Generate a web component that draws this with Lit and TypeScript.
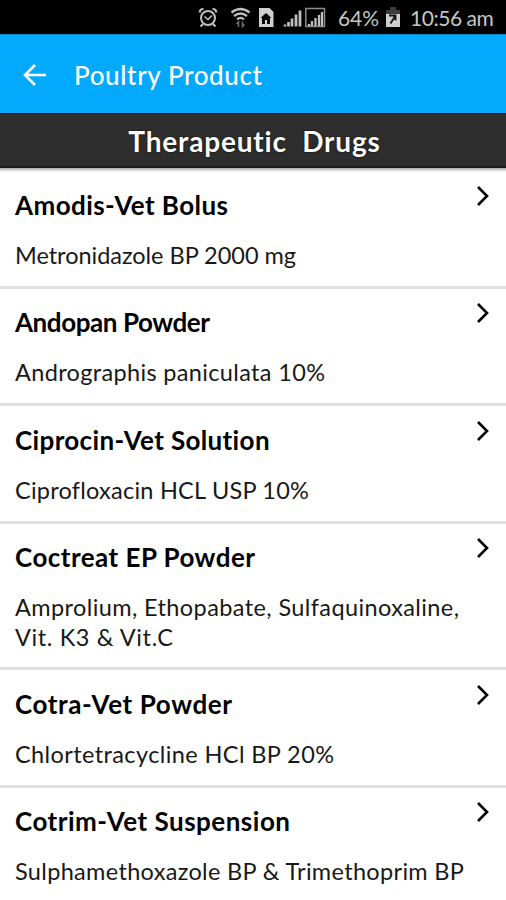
import { LitElement, html, css, svg } from "lit";
import { customElement, property } from "lit/decorators.js";

interface Line { text: string; width: number }
interface Drug { name: Line; lines: Line[] }

const DRUGS: Drug[] = [
  { name: { text: "Amodis-Vet Bolus", width: 213 }, lines: [{ text: "Metronidazole BP 2000 mg", width: 281 }] },
  { name: { text: "Andopan Powder", width: 195 }, lines: [{ text: "Andrographis paniculata 10%", width: 310 }] },
  { name: { text: "Ciprocin-Vet Solution", width: 255 }, lines: [{ text: "Ciprofloxacin HCL USP 10%", width: 294 }] },
  {
    name: { text: "Coctreat EP Powder", width: 240 },
    lines: [
      { text: "Amprolium, Ethopabate, Sulfaquinoxaline,", width: 444 },
      { text: "Vit. K3 & Vit.C", width: 158 },
    ],
  },
  { name: { text: "Cotra-Vet Powder", width: 217 }, lines: [{ text: "Chlortetracycline HCl BP 20%", width: 319 }] },
  { name: { text: "Cotrim-Vet Suspension", width: 275 }, lines: [{ text: "Sulphamethoxazole BP & Trimethoprim BP", width: 449 }] },
];

/** One line of text whose tracking is adjusted so that it spans a given width. */
@customElement("fit-text")
export class FitText extends LitElement {
  @property() text = "";
  @property({ type: Number }) span = 0;

  static styles = css`
    :host { display: block; white-space: pre; }
    .run { display: inline-block; }
  `;

  render() {
    return html`<span class="run">${this.text}</span>`;
  }

  updated() {
    const run = this.renderRoot.querySelector(".run") as HTMLElement;
    run.style.letterSpacing = "0px";
    const natural = run.getBoundingClientRect().width;
    run.style.letterSpacing = `${(this.span - natural) / (this.text.length - 1)}px`;
  }
}

@customElement("status-bar")
export class StatusBar extends LitElement {
  static styles = css`
    :host {
      display: flex; height: 34px; background: #000; color: #c6c6c6;
      font: 21px/35px Lato, sans-serif; box-sizing: border-box; padding-left: 197px;
    }
    svg { display: block; flex: none; }
    .clock { margin-left: 9px; }
  `;

  render() {
    return html`
      <svg width="141" height="34" viewBox="197 0 141 34" fill="none" stroke="#c0c0c0">
        <circle cx="208" cy="18" r="7" stroke-width="2"/>
        <path d="M199.500 12.500Q200 9 203.500 8.700M212.500 8.700Q216 9 216.500 12.500M203 24l-2.500 2.500M213 24l2.500 2.500" stroke-width="2"/>
        <path d="M204.500 16.500l3.500 3 4-4" stroke-width="1.600"/>
        <path d="M231.500 12.500Q240.500 5.500 249.500 12.500M234 16Q240.500 11 247 16M237 19.300Q240.500 16.500 244 19.300" stroke-width="2.300"/>
        <path d="M238.500 27v-5l-2 2M242.500 21.500v5l2-2" stroke="#6c6c6c" stroke-width="1.600"/>
        <path d="M259 8h10.500l4 4v15h-14.500z" fill="#d0d0d0" stroke="none"/>
        <path d="M260.500 18l5.500-5 5.500 5h-1.500v6h-3v-4h-2v4h-3v-6z" fill="#050505" stroke="none"/>
        <path d="M285 26.500v-2M288.500 26.500v-4.500M292 26.500v-8M296 26.500v-12M300 26.500v-16" stroke-width="2.700"/>
        <rect x="305.800" y="8.500" width="18.700" height="18" stroke="#8c8c8c" stroke-width="1.500"/>
        <path d="M309 26v-2M312 26v-5M315.500 26v-8M319 26v-11M322 26v-14" stroke-width="2.300"/>
      </svg>
      <fit-text text="64%" .span=${41}></fit-text>
      <svg width="22" height="34" viewBox="379 0 22 34">
        <path d="M390 7h6v3h4v6h-14v-6h4z" fill="#3c3c3c"/>
        <path d="M386 14h14v13h-14z" fill="#cfcfcf"/>
        <path d="M389 15.500h6.500v5M395.500 15.500l-5 8" fill="none" stroke="#111" stroke-width="1.800"/>
      </svg>
      <fit-text class="clock" text="10:56 am" .span=${84}></fit-text>
    `;
  }
}

@customElement("drug-row")
export class DrugRow extends LitElement {
  @property({ attribute: false }) drug!: Drug;

  static styles = css`
    :host {
      display: flex; justify-content: space-between; box-sizing: border-box;
      padding: 17.500px 16px 15.400px 15px; border-bottom: 3px solid #dfdfdf;
      font-family: Lato, sans-serif; color: #000;
    }
    .name { font-size: 26px; line-height: 32px; font-weight: 700; margin-bottom: 20px; }
    .line { font-size: 23.500px; line-height: 29.500px; color: #181818; }
    .body { flex: none; }
    .chevron { flex: none; margin: -5px 0 0 -30px; }
  `;

  render() {
    return html`
      <div class="body">
        <fit-text class="name" .text=${this.drug.name.text} .span=${this.drug.name.width}></fit-text>
        ${this.drug.lines.map((l) => html`<fit-text class="line" .text=${l.text} .span=${l.width}></fit-text>`)}
      </div>
      <svg class="chevron" width="15" height="24" viewBox="0 0 15 24" fill="none">
        ${svg`<path d="M3 3L12 12L3 21" stroke="#000" stroke-width="2.600"/>`}
      </svg>
    `;
  }
}

@customElement("app-root")
export class AppRoot extends LitElement {
  static styles = css`
    :host { display: flex; flex-direction: column; height: 900px; overflow: hidden; background: #fff; font-family: Lato, sans-serif; }
    status-bar, .toolbar, .section, drug-row { flex: none; }
    .toolbar {
      display: flex; align-items: center; box-sizing: border-box; height: 79px;
      padding: 1px 0 0 22px; background: #03a9fc; border-top: 1px solid #0b86c6; color: #fff;
    }
    .heading { margin-left: 26px; font-size: 26px; line-height: 32px; font-weight: 500; }
    .section {
      display: flex; align-items: center; justify-content: center; box-sizing: border-box; height: 55px;
      border-top: 1px solid #111; border-bottom: 2px solid #1c1c1c;
      background: #2e2e2e; color: #fff; font-size: 28px; font-weight: 700; line-height: 34px;
      padding: 1px 0 0 3px; text-shadow: 0 0 2px #000;
    }
    .list { padding-top: 3.400px; background: linear-gradient(#aaa, #fff 4px); }
  `;

  render() {
    return html`
      <status-bar></status-bar>
      <div class="toolbar">
        <svg width="26" height="26" viewBox="0 0 26 26" fill="none" stroke="#fff" stroke-width="2.600">
          <path d="M24 13H3.500M13 3L3 13l10 10"/>
        </svg>
        <fit-text class="heading" text="Poultry Product" .span=${188}></fit-text>
      </div>
      <div class="section"><fit-text text="Therapeutic  Drugs" .span=${252}></fit-text></div>
      <div class="list">${DRUGS.map((d) => html`<drug-row .drug=${d}></drug-row>`)}</div>
    `;
  }
}
